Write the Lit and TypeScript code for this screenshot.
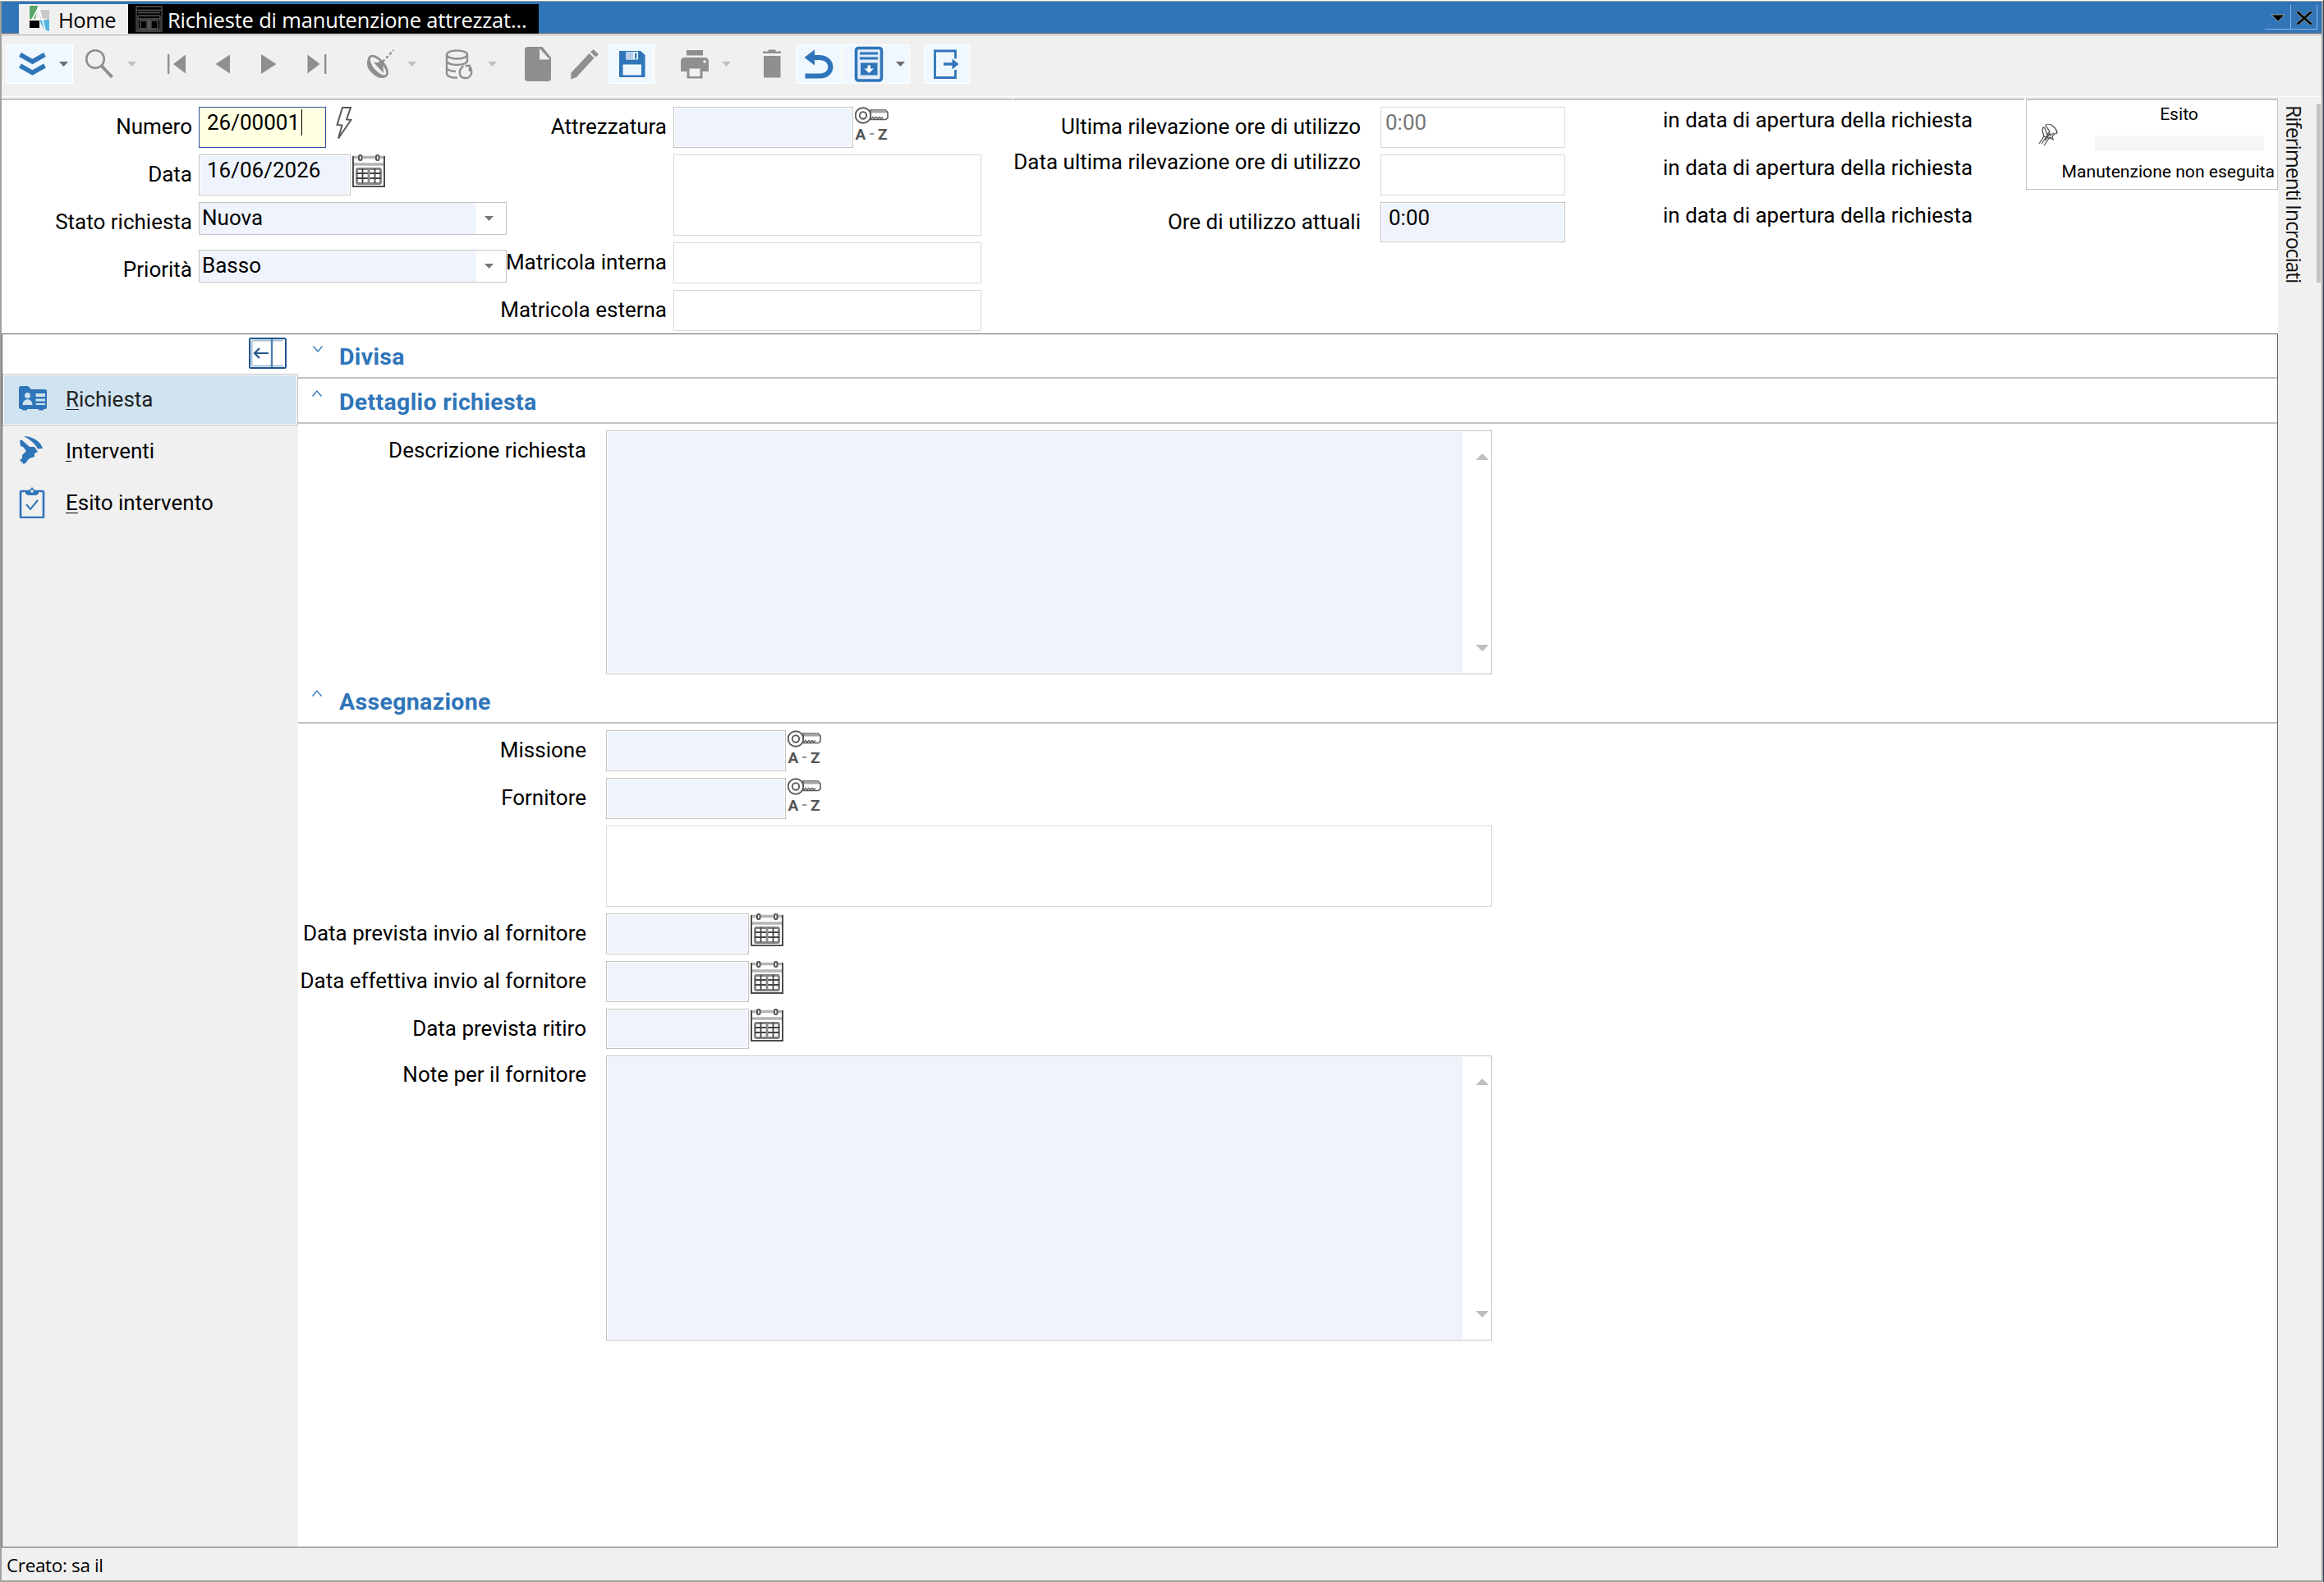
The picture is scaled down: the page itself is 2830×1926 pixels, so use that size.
import { LitElement, html, svg, css, nothing } from "lit";
import { customElement, property } from "lit/decorators.js";
import { classMap } from "lit/directives/class-map.js";

// --- icons --------------------------------------------------------------

// Toolbar glyphs share a 44x44 box and inherit the button colour.
const TOOL_ICONS = {
  expand: svg`<path d="M7.500 10.500l15 8.500 15-8.500M7.500 24l15 8.500 15-8.500" fill="none" stroke="currentColor" stroke-width="5.5"/>`,
  search: svg`<circle cx="16" cy="16" r="10.8" fill="none" stroke="currentColor" stroke-width="2.6"/>
    <path d="M23.5 24l13 14" stroke="currentColor" stroke-width="4"/>`,
  first: svg`<path d="M10 10h2.4v24H10zM32 10.500v23L17 22z" fill="currentColor"/>`,
  prev: svg`<path d="M29 10.500v23L11.500 22z" fill="currentColor"/>`,
  next: svg`<path d="M10 10v24l18.500-12z" fill="currentColor"/>`,
  last: svg`<path d="M9.500 10.500v23l15-11.500zM30 10h2.400v24H30z" fill="currentColor"/>`,
  satellite: svg`<path d="M9 12c-5 6-4 15 3 21 6 6 13 8 18 4z" fill="currentColor"/>
    <ellipse cx="19.500" cy="24.500" rx="15" ry="7" transform="rotate(50 19.500 24.500)" fill="#f0f0f0" stroke="currentColor" stroke-width="2.8"/>
    <path d="M14 20l12 13-.5-13z" fill="currentColor"/>
    <circle cx="23.500" cy="20.500" r="3.200" fill="currentColor"/>
    <path d="M25 19L38.500 5" stroke="currentColor" stroke-width="2.200" stroke-dasharray="3.500 2.500"/>`,
  database: svg`<g fill="none" stroke="currentColor" stroke-width="2.400">
      <ellipse cx="17.500" cy="10.500" rx="12.500" ry="5"/>
      <path d="M5 11v7c0 3 5.500 5 12.500 5S30 21 30 18v-7"/>
      <path d="M5 18.500V26c0 2.500 4 4.500 11 5M5 26v7.500c0 3 5 5.300 13 5.300"/>
      <path d="M25.500 24.500c-7 4-6 14 1.500 14.500 8 .5 10.500-8.500 6-13.500M33 31v-7h-5.500"/>
    </g>`,
  doc: svg`<path d="M10 1h17.500L38 14v25a4 4 0 0 1-4 4H10a4 4 0 0 1-4-4V5a4 4 0 0 1 4-4z" fill="currentColor"/>
    <path d="M24 3v13.500h12.500z" fill="#f0f0f0"/>
    <path d="M26 2l11 13" fill="none" stroke="currentColor" stroke-width="1.500"/>`,
  pencil: svg`<path d="M27.500 9l6 5.500L12 38l-7 2.500.5-8zM29 7.500l3.500-3.500 6.500 6-3.500 3.500z" fill="currentColor"/>`,
  save: svg`<path d="M7 6h26l5.500 5v27H7z" fill="currentColor"/>
    <path d="M15 7h15v9.500H15zM11.500 22.500h22.500v13H11.500z" fill="#f0f7ff"/>
    <path d="M15 7h9v9.500h-9z" fill="#b7cfe8"/>
    <path d="M26 8.500h2.200v7H26z" fill="currentColor"/>`,
  printer: svg`<path d="M12 5h20v6.500H12zM9.500 14h25a4.500 4.500 0 0 1 4.500 4.500V31H5V18.500A4.500 4.500 0 0 1 9.500 14z" fill="currentColor"/>
    <path d="M12.500 26h19v13.500h-19z" fill="currentColor"/>
    <path d="M15.500 27.500h13v9.500h-13z" fill="#f0f0f0"/>
    <circle cx="34" cy="19" r="1.800" fill="#f0f0f0"/>`,
  trash: svg`<path d="M11 6.500h6.500v-2h9v2H33V9H11zM12 12h20.500v26.500H12z" fill="currentColor"/>`,
  undo: svg`<path d="M15 14h7c19 0 19 22.500 1 22.500H5.500" fill="none" stroke="currentColor" stroke-width="6"/>
    <path d="M4.500 14L17 4.500v19z" fill="currentColor"/>`,
  archive: svg`<rect x="6.500" y="2.500" width="31" height="39.500" rx="3" fill="#dfecf8" stroke="currentColor" stroke-width="3.600"/>
    <path d="M11 7.500h22v3H11zM11 13.500h22v3H11zM12 20.500h20.500V35.500H12z" fill="currentColor"/>
    <path d="M20.500 23.500h3.500v4h4L22.300 33l-5.800-5.500h4z" fill="#fff"/>`,
  exit: svg`<path d="M32.500 15.500V6H7.500v32.500h25V29" fill="none" stroke="currentColor" stroke-width="2.800"/>
    <path d="M18 22h15" stroke="currentColor" stroke-width="3.400"/>
    <path d="M28.500 15.500L36.500 22l-8 6.500z" fill="currentColor"/>`,
};

const calendarIcon = html`<svg width="40" height="40" viewBox="0 0 40 40" fill="none">
  <path d="M1 3.500h38M2 12h36" stroke="#b5b5b5" stroke-width="3.500"/>
  <path d="M1 2v37h38V2" stroke="#4d4d4d" stroke-width="2"/>
  <rect x="8" y="1" width="3.500" height="6" rx="1.500" fill="#fff" stroke="#555" stroke-width="2"/>
  <rect x="29" y="1" width="3.500" height="6" rx="1.500" fill="#fff" stroke="#555" stroke-width="2"/>
  <rect x="5.500" y="17.500" width="29" height="18" rx="1.500" stroke="#828282" stroke-width="2.800"/>
  <path d="M12.500 17v18M27.500 17v18M5 23h30M5 29h30" stroke="#444" stroke-width="1.800"/>
  <path d="M20 17v18" stroke="#8a8a8a" stroke-width="2.800"/>
</svg>`;

const keyIcon = html`<svg width="48" height="50" viewBox="0 0 48 50">
  <path d="M19 4h18.500l2.500 3v6.500L37.500 15.500H19z" fill="#fff" stroke="#5a5a5a" stroke-width="1.600"/>
  <path d="M20 4h17.500l2 3.500H20z" fill="#a3a3a3"/>
  <path d="M20 14.500l2-2 2 2 2-2 2 2 2-2 2 2 2-2" fill="none" stroke="#5a5a5a" stroke-width="1.300"/>
  <circle cx="10" cy="10.500" r="9.300" fill="#fff" stroke="#5a5a5a" stroke-width="1.900"/>
  <circle cx="10" cy="10.500" r="4.200" fill="#fff" stroke="#5a5a5a" stroke-width="1.900"/>
  <g font-family="Roboto, sans-serif" font-weight="700" font-size="19" fill="#555">
    <text x="0.500" y="40">A</text><text x="17" y="39" fill="#999">-</text><text x="28" y="40">Z</text>
  </g>
</svg>`;

const boltIcon = html`<svg width="20" height="42" viewBox="0 0 20 42">
  <path d="M8 1h10l-5 14.500 5.500.5L3 38.500l4.500-16-6-.500z" fill="#fff" stroke="#555" stroke-width="1.900"/>
</svg>`;

const wrenchIcon = html`<svg width="24" height="26" viewBox="0 0 24 26" fill="none" stroke="#555" stroke-width="1.300">
  <path d="M1 24l6-9-2-7 1-4 2 1 3 8 3-4-5-7 1-2h3c6 2 10 7 10 11l-3 1-3 3 1 4-4-3-7 10"/>
  <path d="M4 24l9-13M8 20l7-9M7 15l8 3M14 14l5-3"/>
</svg>`;

const caret = html`<svg class="caret" width="11" height="6" viewBox="0 0 11 6"><path d="M0 0h11L5.500 6z" fill="currentColor"/></svg>`;

const NAV_ICONS = {
  card: svg`<path d="M0 3.500Q0 1 2 1h9l4 4h17q2 0 2 2v20q0 2-2 2h-2v1.500h-6V29h-14v1.500H4V29H2q-2 0-2-2z" fill="#2f75b9"/>
    <circle cx="10.500" cy="12.500" r="3.500" fill="#d0e3f0"/><path d="M4.500 24c0-9 12-9 12 0z" fill="#d0e3f0"/>
    <path d="M20.500 10h11.500v4H20.500zM20.500 16.500h11.500v3H20.500zM20.500 22h11.500v2H20.500z" fill="#d0e3f0"/>`,
  hammer: svg`<path d="M6 0C17 0 27 7 29 15l-6 .500C20 9 13 4 6 0z" fill="#2f75b9"/>
    <path d="M1 5l3 0 9 8h6l4 6-4 2 0 4-6 2-3 3 0 1-4 3-5-5 3-2 0-4 5-5-4-5-3-1z" fill="#2f75b9"/>`,
  clipboard: svg`<rect x="2" y="5" width="28" height="32" rx="1" fill="none" stroke="#2f75b9" stroke-width="2.600"/>
    <path d="M8 5h4l4-5 4 5h4v3l-3 2H11L8 8z" fill="#2f75b9"/><circle cx="16" cy="5" r="1.700" fill="#f0f0f0"/>
    <path d="M9 21l5 6 9-11" fill="none" stroke="#2f75b9" stroke-width="2"/>`,
};

// --- shared field elements ----------------------------------------------

type FieldKind = "edit" | "focus" | "readonly";

@customElement("form-row")
class FormRow extends LitElement {
  @property() label = "";

  static styles = css`
    :host {
      display: flex;
      gap: var(--label-gap, 8px);
      align-items: flex-start;
      height: var(--row-height, 50px);
    }
    .label {
      display: flex;
      justify-content: flex-end;
      width: var(--label-width);
      flex: none;
      padding-top: var(--label-top, 9px);
      line-height: var(--label-line, 30px);
      white-space: nowrap;
    }
    .controls {
      display: flex;
      align-items: flex-start;
      height: 100%;
      gap: 2px;
    }
  `;

  render() {
    return html`<div class="label">${this.label}</div><div class="controls"><slot></slot></div>`;
  }
}

@customElement("text-field")
class TextField extends LitElement {
  @property() kind: FieldKind = "edit";
  @property() value = "";

  static styles = css`
    :host {
      display: block;
      box-sizing: border-box;
      width: var(--w, 375px);
      height: 100%;
    }
    .box {
      box-sizing: border-box;
      width: 100%;
      height: 100%;
      border: 1px solid #c3c3c3;
      padding: 1px;
      background: #fff;
    }
    .inner {
      display: flex;
      align-items: flex-start;
      height: 100%;
      box-sizing: border-box;
      padding: 2px 0 0 8px;
      background: #eff4fc;
      line-height: 30px;
      white-space: nowrap;
    }
    .focus { border-color: #2f4f9f; }
    .focus, .focus .inner { background: #ffffe1; }
    .readonly { border-color: #d9d9d9; }
    .readonly .inner { background: #fff; color: #777; padding-left: 4px; }
    .cursor { width: 1px; height: 32px; background: #000; margin: -1px 0 0 2px; }
  `;

  render() {
    return html`<div class="box ${this.kind}">
      <div class="inner">${this.value}${this.kind === "focus" ? html`<span class="cursor"></span>` : nothing}</div>
    </div>`;
  }
}

@customElement("combo-field")
class ComboField extends LitElement {
  @property() value = "";

  static styles = css`
    :host {
      display: flex;
      box-sizing: border-box;
      width: 375px;
      height: 40px;
      border: 1px solid #c3c3c3;
      line-height: 30px;
      background: #fff;
    }
    .value {
      width: 334px;
      padding: 3px 0 0 3px;
      background: #eff4fc;
    }
    .caret { margin: 16px 0 0 10px; color: #777; }
  `;

  render() {
    return html`<div class="value">${this.value}</div>${caret}`;
  }
}

@customElement("memo-field")
class MemoField extends LitElement {
  static styles = css`
    :host {
      display: flex;
      box-sizing: border-box;
      width: 1079px;
      height: 100%;
      border: 1px solid #c3c3c3;
      padding: 1px;
      background: #fff;
    }
    .text { width: 1041px; background: #eff4fc; }
    .bar {
      flex: 1;
      display: flex;
      flex-direction: column;
      justify-content: space-between;
      padding: 26px 2px 26px 0;
      align-items: flex-end;
    }
  `;

  render() {
    return html`
      <div class="text"></div>
      <div class="bar">
        <svg width="16" height="8" viewBox="0 0 16 8"><path d="M0 8h16L8 0z" fill="#bfbfbf"/></svg>
        <svg width="16" height="8" viewBox="0 0 16 8"><path d="M0 0h16L8 8z" fill="#bfbfbf"/></svg>
      </div>
    `;
  }
}

// --- <tool-bar> ---------------------------------------------------------

type Tool = { icon: keyof typeof TOOL_ICONS; active?: boolean; split?: boolean; sep?: boolean; wide?: boolean };

const TOOLS: Tool[] = [
  { icon: "expand", active: true, split: true },
  { icon: "search", split: true },
  { icon: "first", sep: true },
  { icon: "prev" },
  { icon: "next" },
  { icon: "last" },
  { icon: "satellite", split: true, sep: true },
  { icon: "database", split: true, sep: true },
  { icon: "doc", sep: true },
  { icon: "pencil" },
  { icon: "save", active: true },
  { icon: "printer", split: true, sep: true, wide: true },
  { icon: "trash", sep: true },
  { icon: "undo", active: true },
  { icon: "archive", active: true, split: true },
  { icon: "exit", active: true, sep: true, wide: true },
];

@customElement("tool-bar")
class ToolBar extends LitElement {
  static styles = css`
    :host {
      display: flex;
      box-sizing: border-box;
      height: 78px;
      gap: 1px;
      padding: 11px 0 0 5px;
      border-top: 1px solid #a0a0a0;
      background: linear-gradient(#f0f0f0 74px, #fcfcfc 74px, #fcfcfc 75px, #f0f0f0 75px);
    }
    .tool {
      display: flex;
      align-items: center;
      box-sizing: border-box;
      width: 56px;
      height: 48px;
      padding-left: 6px;
      color: #8f8f8f;
    }
    .split { width: 82px; padding-left: 10px; }
    .sep { margin-left: 15px; }
    .wide { margin-left: 16px; }
    .active {
      color: #2f75b9;
      background: #eff7ff;
      box-shadow: inset 0 0 0 1px #fff;
    }
    .caret { margin-left: 11px; color: #bfbfbf; }
    .active .caret { color: #6d6d6d; }
  `;

  render() {
    return TOOLS.map(
      (t) => html`<div class=${classMap({ tool: true, split: !!t.split, active: !!t.active, sep: !!t.sep, wide: !!t.wide })}>
        <svg width="44" height="44" viewBox="0 0 44 44">${TOOL_ICONS[t.icon]}</svg>
        ${t.split ? caret : nothing}
      </div>`,
    );
  }
}

// --- <section-title> ----------------------------------------------------

@customElement("section-title")
class SectionTitle extends LitElement {
  @property({ type: Boolean }) collapsed = false;

  static styles = css`
    :host {
      display: flex;
      align-items: flex-start;
      box-sizing: border-box;
      height: 55px;
      border-bottom: 2px solid #c3c3c3;
      padding: 12px 0 0 17px;
      font-size: 28.5px;
      font-weight: 700;
      line-height: 33px;
      letter-spacing: 0.33px;
      color: #2f75b9;
    }
    :host([collapsed]) { height: 54px; padding: 11px 0 0 18px; }
    svg { margin: 2px 21px 0 0; }
    :host([collapsed]) svg { margin: 3px 20px 0 0; }
  `;

  render() {
    return html`
      <svg width="12" height="8" viewBox="0 0 12 8" fill="none" stroke="#2f75b9" stroke-width="1.3">
        <path d=${this.collapsed ? "M.5 .5L6 7l5.500-6.500" : "M.5 7.500L6 1l5.500 6.500"}></path>
      </svg>
      <slot></slot>
    `;
  }
}

// --- <app-root> ---------------------------------------------------------

const NAV = [
  { icon: "card", key: "R", rest: "ichiesta", selected: true, box: "0 -2 34 38" },
  { icon: "hammer", key: "I", rest: "nterventi", selected: false, box: "0 -1 34 38" },
  { icon: "clipboard", key: "E", rest: "sito intervento", selected: false, box: "0 0 34 38" },
] as const;

@customElement("app-root")
class AppRoot extends LitElement {
  static styles = css`
    :host {
      display: block;
      box-sizing: border-box;
      width: 2830px;
      height: 1926px;
      padding-top: 1px;
      border-right: 1px solid #34465c;
      background: #fff;
      color: #000;
      font: 26px Roboto, "Liberation Sans", sans-serif;
      overflow: hidden;
    }
    .window {
      display: flex;
      flex-direction: column;
      box-sizing: border-box;
      height: 1925px;
      border: 2px solid #a0a0a0;
      border-top-width: 1px;
    }
    svg { display: block; flex: none; }

    .titlebar {
      display: flex;
      box-sizing: border-box;
      height: 39px;
      margin-bottom: 1px;
      padding: 3px 5px 0 21px;
      border-bottom: 1px solid #5f5f5f;
      background: #3175b9;
      font: 25.5px "Open Sans", "Noto Sans", sans-serif;
      line-height: 38px;
    }
    .tab { display: flex; height: 36px; white-space: nowrap; }
    .home { width: 133px; background: #f0f0f0; letter-spacing: -0.5px; }
    .home svg { margin: 2px 10px 0 13px; }
    .current { width: 500px; background: #000; color: #fff; letter-spacing: -0.18px; }
    .current svg { margin: 2px 6px 0 9px; }
    .window-buttons { display: flex; margin-left: auto; height: 30px; margin-top: 1px; }
    .wbtn {
      display: flex;
      align-items: center;
      justify-content: center;
      box-sizing: border-box;
      width: 32px;
      padding-top: 2px;
      border-right: 1px solid #8fb8e6;
      border-bottom: 1px solid #8fb8e6;
    }

    .body { display: flex; flex: 1; min-height: 0; }
    .main { display: flex; flex-direction: column; width: 2772px; }

    .header { display: flex; gap: 1px; height: 286px; flex: none; align-items: flex-start; }
    .panel {
      display: flex;
      box-sizing: border-box;
      width: 1231px;
      padding-top: 8px;
      border-top: 2px solid #c3c3c3;
    }
    .group { display: flex; flex-direction: column; gap: 8px; }
    .g1 { --label-width: 232px; }
    .g2 { --label-width: 195px; }
    .g3 { --label-width: 423px; --label-gap: 24px; }
    .w155 { --w: 155px; }
    .w185 { --w: 185px; }
    .w174 { --w: 174px; }
    .w219 { --w: 219px; }
    .w225 { --w: 225px; }
    .w1079 { --w: 1079px; }
    .tall { --row-height: 99px; }
    .short { --row-height: 49px; }
    .tight { --label-top: 0; --label-line: 18px; }
    .bolt { margin-left: 10px; }
    .notes { margin-left: 119px; line-height: 30px; }
    .notes div { height: 49px; padding-top: 1px; white-space: nowrap; }

    .outcome {
      display: flex;
      box-sizing: border-box;
      width: 307px;
      height: 111px;
      margin-left: 1px;
      border: 1px solid #c3c3c3;
      border-top-width: 2px;
      font-size: 21.1px;
      line-height: 25px;
      white-space: nowrap;
    }
    .outcome svg { margin: 29px 0 0 14px; }
    .outcome-text { width: 263px; margin-left: auto; padding-top: 4px; }
    .outcome-title { margin-left: 24px; text-align: center; }
    .outcome-bar { width: 206px; height: 19px; margin: 14px 0 0 41px; background: #f6f6f6; }
    .outcome-value { margin-top: 12px; padding-right: 3px; text-align: right; }

    .frame { display: flex; flex: 1; box-sizing: border-box; border: 1px solid #606060; }
    .nav { width: 360px; background: #f0f0f0; }
    .nav-top { display: flex; justify-content: flex-end; height: 44px; padding: 4px 14px 0 0; background: #fff; }
    .nav-item {
      display: flex;
      align-items: center;
      box-sizing: border-box;
      height: 63px;
      padding: 0 0 2px 19px;
      border: 1px solid transparent;
    }
    .nav-item svg { width: 34px; margin-right: 23px; }
    .nav-item u { text-decoration-thickness: 1px; text-underline-offset: 3px; text-decoration-skip-ink: none; }
    .selected {
      border-color: #c3c3c3;
      background: #d0e3f0;
      box-shadow: inset 0 0 0 1px #fff;
      color: #222;
    }
    .content { flex: 1; --label-width: 351px; --label-gap: 24px; }
    .fields { display: flex; flex-direction: column; gap: 8px; padding-top: 8px; }
    .detail { padding-bottom: 5px; --row-height: 297px; }
    .note { --label-top: 8px; --row-height: 347px; }

    .side {
      display: flex;
      justify-content: space-between;
      box-sizing: border-box;
      width: 53px;
      padding: 7px 1px 0 2px;
      background: #f0f0f0;
      font: 25px "Open Sans", "Noto Sans", sans-serif;
    }
    .side-label {
      writing-mode: vertical-rl;
      line-height: 36px;
      padding-top: 1px;
      letter-spacing: -1.17px;
      color: #111;
      white-space: nowrap;
    }
    .side-thumb { width: 5px; height: 217px; background: #c3c3c3; }

    .status {
      height: 40px;
      padding-left: 6px;
      background: #f0f0f0;
      font: 22.500px "Open Sans", "Noto Sans", sans-serif;
      line-height: 44px;
      letter-spacing: -0.35px;
    }
  `;

  render() {
    return html`
      <div class="window">
        ${this.renderTitlebar()}
        <tool-bar></tool-bar>
        <div class="body">
          <div class="main">
            ${this.renderHeader()}
            <div class="frame">${this.renderNav()}${this.renderContent()}</div>
          </div>
          <div class="side">
            <div class="side-label">Riferimenti Incrociati</div>
            <div class="side-thumb"></div>
          </div>
        </div>
        <div class="status">Creato: sa il</div>
      </div>
    `;
  }

  renderTitlebar() {
    return html`
      <div class="titlebar">
        <div class="tab home">
          <svg width="25" height="32" viewBox="0 0 25 32">
            <path d="M0 0h10L7 16H0z" fill="#5aa66a"/>
            <path d="M13 5h11v12H13z" fill="#c9c9c9"/>
            <path d="M0 18h12v9H0z" fill="#000"/>
            <path d="M13 17h11v14l-6-2-5-9z" fill="#56b4e0"/>
            <path d="M3 17L11 2l8 27M5 16.500h15" fill="none" stroke="#fff" stroke-width="1.600"/>
          </svg>
          Home
        </div>
        <div class="tab current">
          <svg width="33" height="32" viewBox="0 0 33 32" fill="none" stroke="#555" stroke-width="1.300">
            <path d="M1 1h31v30H1zM1 5.500h31M3 8.500h27M3 12h27M3 16h27M3 12v17h27V12"/>
            <path d="M6 18h8v10H6zM19 18h8v10h-8z"/>
            <path d="M16.500 17v12" stroke-width="4"/>
          </svg>
          Richieste di manutenzione attrezzat...
        </div>
        <div class="window-buttons">
          <div class="wbtn"><svg width="18" height="10" viewBox="0 0 18 10"><path d="M1 1h16L9 9z" fill="#000" stroke="#d8cfa8" stroke-width=".6"/></svg></div>
          <div class="wbtn"><svg width="20" height="18" viewBox="0 0 20 18"><path d="M1.500 1.500l17 15M18.500 1.500l-17 15" stroke="#d8cfa8" stroke-width="3.600"/><path d="M1.500 1.500l17 15M18.500 1.500l-17 15" stroke="#000" stroke-width="2.800"/></svg></div>
        </div>
      </div>
    `;
  }

  renderHeader() {
    return html`
      <div class="header">
        <div class="panel">
          <div class="group g1">
            <form-row label="Numero">
              <text-field class="w155" kind="focus" value="26/00001"></text-field>
              <div class="bolt">${boltIcon}</div>
            </form-row>
            <form-row label="Data"><text-field class="w185" value="16/06/2026"></text-field>${calendarIcon}</form-row>
            <form-row label="Stato richiesta"><combo-field value="Nuova"></combo-field></form-row>
            <form-row label="Priorità"><combo-field value="Basso"></combo-field></form-row>
          </div>
          <div class="group g2">
            <form-row label="Attrezzatura"><text-field class="w219"></text-field>${keyIcon}</form-row>
            <form-row class="tall"><text-field kind="readonly"></text-field></form-row>
            <form-row label="Matricola interna"><text-field kind="readonly"></text-field></form-row>
            <form-row label="Matricola esterna"><text-field kind="readonly"></text-field></form-row>
          </div>
        </div>
        <div class="panel">
          <div class="group g3">
            <form-row label="Ultima rilevazione ore di utilizzo"><text-field class="w225" kind="readonly" value="0:00"></text-field></form-row>
            <form-row class="tight" label="Data ultima rilevazione ore di utilizzo"><text-field class="w225" kind="readonly"></text-field></form-row>
            <form-row class="short" label="Ore di utilizzo attuali"><text-field class="w225" value="0:00"></text-field></form-row>
          </div>
          <div class="group notes">
            ${[0, 1, 2].map(() => html`<div>in data di apertura della richiesta</div>`)}
          </div>
        </div>
        <div class="outcome">
          ${wrenchIcon}
          <div class="outcome-text">
            <div class="outcome-title">Esito</div>
            <div class="outcome-bar"></div>
            <div class="outcome-value">Manutenzione non eseguita</div>
          </div>
        </div>
      </div>
    `;
  }

  renderNav() {
    return html`
      <div class="nav">
        <div class="nav-top">
          <svg width="46" height="38" viewBox="0 0 46 38" fill="none">
            <path d="M4 3.500h38M4 34.500h38M3.500 4v30" stroke="#a9c2dc" stroke-width="2"/>
            <rect x="1" y="1" width="44" height="36" rx="1.500" stroke="#22568c" stroke-width="2"/>
            <path d="M28 2v34" stroke="#4f80ae" stroke-width="2.400"/>
            <path d="M7 19h17M13 13l-6 6 6 6" stroke="#22568c" stroke-width="2.200"/>
          </svg>
        </div>
        ${NAV.map(
          (n) => html`<div class="nav-item ${n.selected ? "selected" : ""}">
            <svg width="34" height="38" viewBox=${n.box}>${NAV_ICONS[n.icon]}</svg>
            <span><u>${n.key}</u>${n.rest}</span>
          </div>`,
        )}
      </div>
    `;
  }

  renderContent() {
    return html`
      <div class="content">
        <section-title collapsed>Divisa</section-title>
        <section-title>Dettaglio richiesta</section-title>
        <div class="fields detail">
          <form-row label="Descrizione richiesta"><memo-field></memo-field></form-row>
        </div>
        <section-title>Assegnazione</section-title>
        <div class="fields">
          <form-row label="Missione"><text-field class="w219"></text-field>${keyIcon}</form-row>
          <form-row label="Fornitore"><text-field class="w219"></text-field>${keyIcon}</form-row>
          <form-row class="tall"><text-field class="w1079" kind="readonly"></text-field></form-row>
          <form-row label="Data prevista invio al fornitore"><text-field class="w174"></text-field>${calendarIcon}</form-row>
          <form-row label="Data effettiva invio al fornitore"><text-field class="w174"></text-field>${calendarIcon}</form-row>
          <form-row class="short" label="Data prevista ritiro"><text-field class="w174"></text-field>${calendarIcon}</form-row>
          <form-row class="note" label="Note per il fornitore"><memo-field></memo-field></form-row>
        </div>
      </div>
    `;
  }
}
